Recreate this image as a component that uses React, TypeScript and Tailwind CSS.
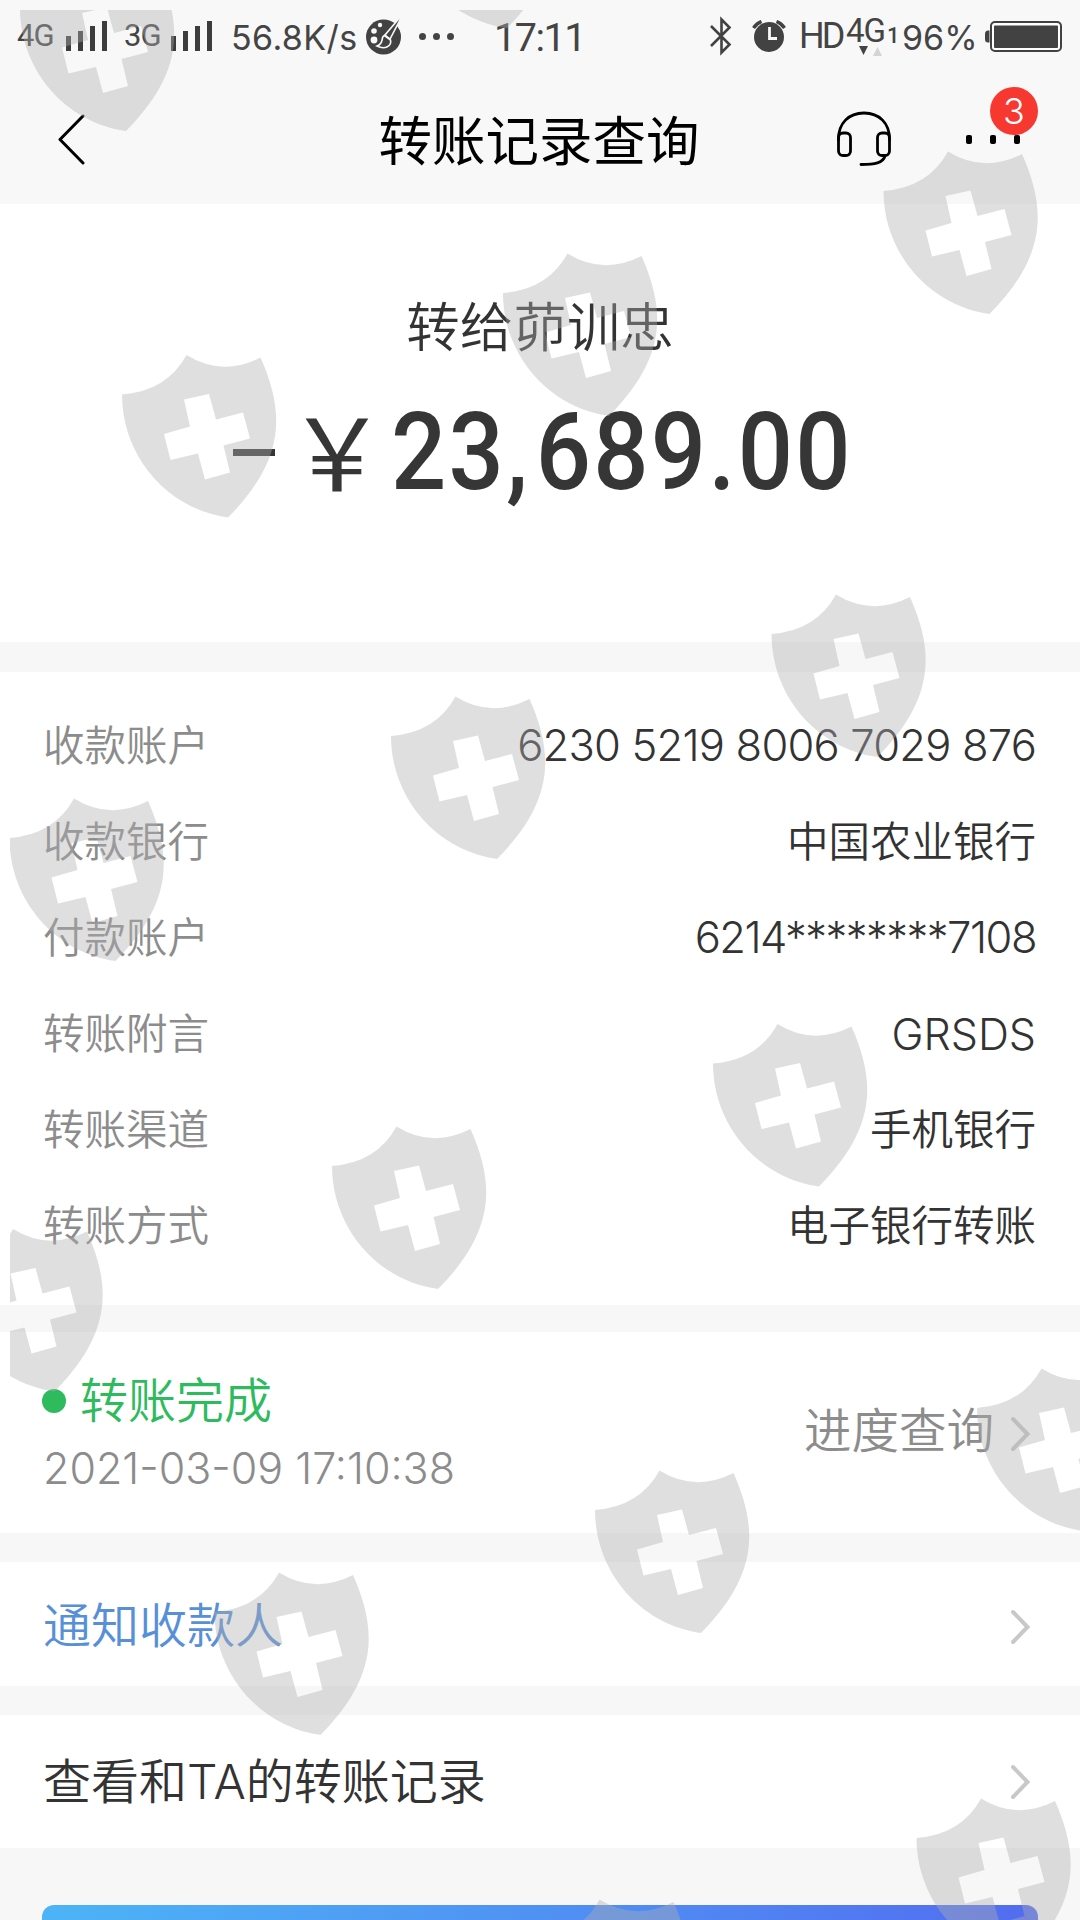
import type { ReactNode } from "react";

const details = [
  { label: "收款账户", value: "6230 5219 8006 7029 876", style: "text-[43.500px] tracking-[-0.8px]" },
  { label: "收款银行", value: "中国农业银行", style: "" },
  { label: "付款账户", value: "6214********7108", style: "text-[43.500px] tracking-[-1.5px]" },
  { label: "转账附言", value: "GRSDS", style: "text-[43px]" },
  { label: "转账渠道", value: "手机银行", style: "" },
  { label: "转账方式", value: "电子银行转账", style: "" },
];

// top left corner of each shield on the page
const shields = [
  [20, -31.5],
  [401, -134.5],
  [883.5, 151.5],
  [503, 253.5],
  [122, 355],
  [771.5, 594.5],
  [391, 696.5],
  [9.5, 798.5],
  [713, 1024],
  [332, 1126.5],
  [-51.5, 1229],
  [977, 1368.5],
  [595, 1470.5],
  [214.5, 1572.5],
  [916.5, 1798.5],
  [535, 1899.5],
];

function Signal() {
  return (
    <svg width="41" height="30" viewBox="0 0 41 30" fill="#3c3c3c">
      <rect x="0" y="15" width="5" height="15" />
      <rect x="12" y="10" width="5" height="20" />
      <rect x="24" y="5" width="5" height="25" />
      <rect x="36" y="0" width="5" height="30" />
    </svg>
  );
}

function Palette() {
  return (
    <svg width="38" height="40" viewBox="0 0 38 40">
      <circle cx="17.5" cy="22" r="17.5" fill="#424242" />
      <circle cx="14" cy="10" r="2.2" fill="#f8f8f8" />
      <circle cx="8" cy="16" r="2.8" fill="#f8f8f8" />
      <circle cx="8" cy="25" r="3.4" fill="#f8f8f8" />
      <path d="M36 0 L19 20 L24 24 L36 1 Z" fill="#424242" stroke="#f8f8f8" strokeWidth="1.6" />
      <path d="M18.500 20.500 C14 22 19 28 11 31 C19 35 26 31 24.500 25 Z" fill="#424242" stroke="#f8f8f8" strokeWidth="1.6" />
    </svg>
  );
}

function Bluetooth() {
  return (
    <svg width="22" height="40" viewBox="0 0 22 40" fill="none" stroke="#424242" strokeWidth="2.6">
      <path d="M1 10 L19.500 28.500 L11.500 36.500 V3.500 L19.500 11.500 L1 30" />
    </svg>
  );
}

function Alarm() {
  return (
    <svg width="34" height="33" viewBox="0 0 34 33">
      <circle cx="17" cy="17" r="15" fill="#424242" />
      <path d="M1.500 8 A17 17 0 0 1 9.500 1.500 M24.500 1.500 A17 17 0 0 1 32.500 8" fill="none" stroke="#424242" strokeWidth="3.4" />
      <path d="M17.500 7 V18.500 H25" fill="none" stroke="#f8f8f8" strokeWidth="2.8" />
    </svg>
  );
}

function Battery() {
  return (
    <svg width="77" height="31" viewBox="0 0 77 31">
      <path d="M4.500 9.500 H3 Q0 9.500 0 13 V18 Q0 21.500 3 21.500 H4.500 Z" fill="#424242" />
      <rect x="6" y="1" width="70" height="29" rx="4" fill="#fff" stroke="#424242" strokeWidth="2" />
      <rect x="9" y="4.500" width="64" height="22.500" rx="1" fill="#424242" />
    </svg>
  );
}

function StatusBar() {
  return (
    <div className="flex h-[76px] items-start whitespace-nowrap font-[Roboto,sans-serif] font-normal text-[#444]">
      <div className="ml-[17px] mt-[18px] w-[49px] text-[31px] leading-[36px] tracking-[-1px]">4G</div>
      <div className="mt-[21px] w-[58px]"><Signal /></div>
      <div className="mt-[18px] w-[47px] text-[31px] leading-[36px] tracking-[-1px]">3G</div>
      <div className="mt-[21px] w-[60px]"><Signal /></div>
      <div className="mt-[17px] w-[135px] font-[Inter,sans-serif] text-[34px] leading-[41px] tracking-[0.4px]">56.8K/s</div>
      <div className="mt-[15px] w-[53px]"><Palette /></div>
      <div className="mt-[33px] flex w-[75px] gap-[7px]">
        <span className="size-[7px] rounded-full bg-[#444]" />
        <span className="size-[7px] rounded-full bg-[#444]" />
        <span className="size-[7px] rounded-full bg-[#444]" />
      </div>
      <div className="mt-[17px] w-[216px] text-[39.500px] leading-[42px] tracking-[-1.5px]">17:11</div>
      <div className="mt-[16px] w-[42px]"><Bluetooth /></div>
      <div className="mt-[20px] w-[47px]"><Alarm /></div>
      <div className="mt-[15px] w-[47px] text-[36px] leading-[42px] tracking-[-3px]">HD</div>
      <div className="mt-[15px] w-[41px]">
        <div className="text-[33px] leading-[32px] tracking-[-1px]">4G</div>
        <svg className="-mt-px ml-[13px]" width="24" height="10" viewBox="0 0 24 10">
          <path d="M0 0 H9 L4.500 9 Z" fill="#444" />
          <path d="M14 10 H23 L18.500 1 Z" fill="#d4d4d4" />
        </svg>
      </div>
      <div className="mt-[25px] w-[15px] text-[22px] font-medium leading-[22px]">1</div>
      <div className="mt-[17px] w-[83px] font-[Inter,sans-serif] text-[34px] leading-[41px]">96%</div>
      <div className="mt-[21px]"><Battery /></div>
    </div>
  );
}

function NavBar() {
  return (
    <div className="relative flex h-[128px] items-center justify-center">
      <svg className="absolute left-[58px] top-[38px]" width="27" height="51" viewBox="0 0 27 51" fill="none" stroke="#000" strokeWidth="3" strokeLinecap="round" strokeLinejoin="round">
        <path d="M25 2 L2 25.500 L25 49" />
      </svg>
      <h1 className="pr-[2px] pt-[4px] text-[53.500px] font-normal leading-[64px] text-black">转账记录查询</h1>
      <svg className="absolute left-[836px] top-[34px]" width="56" height="57" viewBox="0 0 56 57" fill="none" stroke="#000" strokeWidth="2.8" strokeLinecap="round">
        <path d="M2.500 30 C2 13 13 3 28 3 S54 13 53.500 30" />
        <rect x="2.500" y="23" width="12" height="22.500" rx="4.500" />
        <rect x="41.500" y="23" width="12" height="22.500" rx="4.500" />
        <path d="M49 46 C47 53 39 54.500 25 54.500" />
      </svg>
      <div className="absolute left-[966px] top-[59px] flex gap-[18px]">
        <span className="h-[9px] w-[6px] rounded-[2px] bg-black" />
        <span className="h-[9px] w-[6px] rounded-[2px] bg-black" />
        <span className="h-[9px] w-[6px] rounded-[2px] bg-black" />
      </div>
      <span className="absolute left-[990px] top-[11px] flex size-[48px] items-center justify-center rounded-full bg-[#f63830] text-[36px] leading-none text-white">3</span>
    </div>
  );
}

function Chevron() {
  return (
    <svg width="20" height="36" viewBox="0 0 20 36" fill="none" stroke="#c8c8c8" strokeWidth="4" strokeLinecap="round">
      <path d="M2 3 L16.500 18 L2 33" />
    </svg>
  );
}

function Row({ children }: { children: ReactNode }) {
  return <div className="flex items-center justify-between bg-white pl-[43px] pr-[49px]">{children}</div>;
}

function Watermark() {
  return (
    <div className="pointer-events-none absolute bottom-0 left-[10px] right-0 top-[10px] overflow-hidden">
      <svg width="1070" height="1910" viewBox="10 10 1070 1910" fill="#afafaf" fillOpacity="0.4" fillRule="evenodd">
        {shields.map(([x, y]) => (
          <path
            key={`${x}-${y}`}
            transform={`translate(${x} ${y})`}
            d="M0 39.500 Q45 36 64.500 0 Q100 22 138.500 2.500 C162 56 165 103 106 162.500 C45 154 0 101 0 39.500 Z M62 44.500 L87 39 L94 64.500 L121 57.500 L128 83.500 L101.500 90.500 L108 117.500 L83 124.500 L76 98.500 L48.500 105 L42 79 L68 71.500 Z"
          />
        ))}
      </svg>
    </div>
  );
}

export default function App() {
  return (
    <div className="relative h-[1920px] w-[1080px] overflow-hidden bg-[#f7f7f7] font-[Inter,'Noto_Sans_CJK_SC',sans-serif] font-[350] text-[#333]">
      <header className="bg-[#f8f8f8]">
        <StatusBar />
        <NavBar />
      </header>

      <section className="flex h-[438px] flex-col items-center bg-white pt-[92px]">
        <p className="text-[53.500px] leading-[64px]">转给茆训忠</p>
        <div className="mt-[37px] flex h-[110px] w-[614px] items-center text-[#363636]">
          <span className="mr-[12px] mt-px h-[7px] w-[42px] shrink-0 bg-[#363636]" />
          <span className="-mt-[8px] w-[104px] shrink-0 font-['Noto_Sans_CJK_SC',sans-serif] text-[100px] font-normal leading-[110px]">￥</span>
          <span className="origin-left scale-x-90 whitespace-nowrap font-[Roboto,sans-serif] text-[108px] font-medium leading-[110px] tracking-[2.6px]">
            23<span className="mr-[6px]">,</span>689.00
          </span>
        </div>
      </section>

      <section className="mt-[30px] h-[633px] bg-white pl-[43px] pr-[44px] pt-[26px]">
        {details.map((item) => (
          <div key={item.label} className="flex h-[96px] items-center justify-between text-[41.500px]">
            <span className="text-[#8c8c8c]">{item.label}</span>
            <span className={item.style}>{item.value}</span>
          </div>
        ))}
      </section>

      <section className="mt-[27px]">
        <Row>
          <div className="h-[201px] pt-[37px]">
            <div className="flex items-center text-[48px] leading-[64px] text-[#2dbb5d]">
              <span className="-ml-px mr-[14px] size-[24px] rounded-full bg-[#2dbb5d]" />
              转账完成
            </div>
            <p className="mt-[5px] text-[43px] leading-[60px] text-[#8c8c8c]">2021-03-09 17:10:38</p>
          </div>
          <div className="flex items-center gap-[17px] text-[47.500px] text-[#8c8c8c]">
            <span className="-mt-[3px]">进度查询</span>
            <span className="mt-[2px]"><Chevron /></span>
          </div>
        </Row>
      </section>

      <section className="mt-[29px]">
        <Row>
          <span className="pt-[3px] text-[48px] leading-[121px] text-[#5790d8]">通知收款人</span>
          <span className="mt-[5px]"><Chevron /></span>
        </Row>
      </section>

      <section className="mt-[29px]">
        <Row>
          <span className="pt-px text-[48px] leading-[132px]">查看和TA的转账记录</span>
          <span className="mt-px"><Chevron /></span>
        </Row>
      </section>

      <div className="mx-[42px] mt-[57px] h-[120px] rounded-[12px] bg-linear-to-r from-[#4cb4f6] to-[#526cf0]" />

      <Watermark />
    </div>
  );
}
